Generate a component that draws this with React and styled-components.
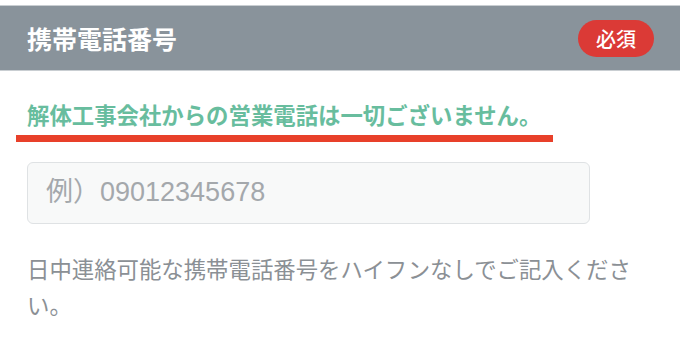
import React from "react";
import styled, { createGlobalStyle } from "styled-components";

const Global = createGlobalStyle`
  html, body { margin: 0; padding: 0; background: #ffffff; }
  body { font-family: "Liberation Sans", "Noto Sans CJK JP", sans-serif; }
  * { box-sizing: border-box; }
`;

const Section = styled.section`
  width: 680px;
  padding-top: 5px;
`;

const Header = styled.div`
  display: flex;
  align-items: center;
  justify-content: space-between;
  height: 66px;
  padding: 0 26px 0 27px;
  background: #89939b;
  border-top: 1px solid #c9ced2;
  border-bottom: 1px solid #c9ced2;
`;

const Title = styled.h2`
  margin: 0;
  font-family: "Noto Sans CJK JP", sans-serif;
  font-size: 25px;
  font-weight: 700;
  color: #ffffff;
  line-height: 1;
`;

const Badge = styled.span`
  display: inline-flex;
  align-items: center;
  justify-content: center;
  height: 37px;
  padding: 0 18px;
  border-radius: 19px;
  background: #db3a36;
  color: #ffffff;
  font-family: "Noto Sans CJK JP", sans-serif;
  font-size: 20px;
  font-weight: 500;
`;

const Body = styled.div`
  display: flex;
  flex-direction: column;
  align-items: flex-start;
  padding: 0 27px;
`;

const Notice = styled.p`
  margin: 27px 0 0 -11px;
  padding: 0 12px 3px 11px;
  border-bottom: 7px solid #e8402a;
  font-family: "Noto Sans CJK JP", sans-serif;
  font-size: 22.4px;
  font-weight: 700;
  line-height: 1.5;
  color: #68bd9e;
`;

const Input = styled.input`
  margin-top: 20px;
  width: 563px;
  height: 62px;
  padding: 0 18px;
  background: #f8f9f9;
  border: 1.5px solid #dfe2e4;
  border-radius: 6px;
  font-family: "Liberation Sans", "Noto Sans CJK JP", sans-serif;
  font-size: 27px;
  color: #333;
  outline: none;
  &::placeholder { color: #a4a8ac; }
`;

const Help = styled.p`
  margin: 26px 0 0;
  width: 100%;
  font-family: "Noto Sans CJK JP", sans-serif;
  font-size: 22.4px;
  line-height: 36px;
  color: #8b9095;
`;

export default function App() {
  return (
    <>
      <Global />
      <Section>
        <Header>
          <Title>携帯電話番号</Title>
          <Badge>必須</Badge>
        </Header>
        <Body>
          <Notice>解体工事会社からの営業電話は一切ございません。</Notice>
          <Input type="tel" placeholder="例）09012345678" />
          <Help>日中連絡可能な携帯電話番号をハイフンなしでご記入ください。</Help>
        </Body>
      </Section>
    </>
  );
}
